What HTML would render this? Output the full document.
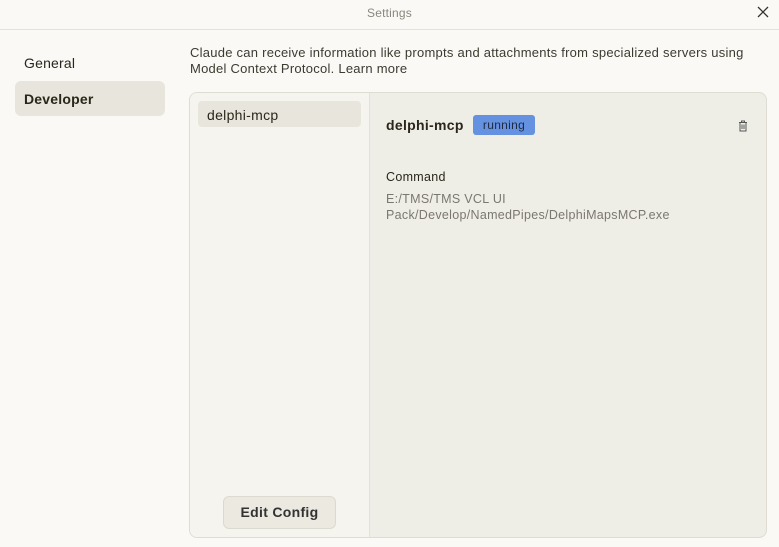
<html><head><style>
body{margin:0;width:779px;height:547px;background:#faf9f5;font-family:"Liberation Sans",sans-serif;color:#29261b;position:relative;overflow:hidden}
.a{position:absolute}
</style></head><body>
<div class="a" style="left:0;top:0;width:779px;height:29px;border-bottom:1px solid #e3e1d9"></div>
<div class="a" style="left:0;width:779px;top:6px;text-align:center;font-size:12px;color:#8a877e;letter-spacing:0.2px">Settings</div>
<svg class="a" style="left:757px;top:6px" width="12" height="12"><path d="M1 1L11 11M11 1L1 11" stroke="#333" stroke-width="1.3"/></svg>
<div class="a" style="left:24px;top:55px;font-size:14px;letter-spacing:0.2px">General</div>
<div class="a" style="left:15px;top:81px;width:150px;height:35px;background:#e8e6dc;border-radius:6px"></div>
<div class="a" style="left:24px;top:91px;font-size:14px;font-weight:bold;letter-spacing:0.2px">Developer</div>
<div class="a" style="left:190px;top:45px;font-size:13px;line-height:16px;color:#3d3a30;letter-spacing:0.25px;white-space:nowrap">Claude can receive information like prompts and attachments from specialized servers using<br>Model Context Protocol. Learn more</div>
<div class="a" style="left:189px;top:92px;width:576px;height:444px;border:1px solid #dedcd3;border-radius:8px;overflow:hidden;background:#efeee6">
<div class="a" style="left:0;top:0;width:179px;height:444px;background:#f5f4ef;border-right:1px solid #e3e1d9"></div>
<div class="a" style="left:8px;top:8px;width:163px;height:26px;background:#e8e6dc;border-radius:4px"></div>
<div class="a" style="left:17px;top:14px;font-size:14px;letter-spacing:0.3px">delphi-mcp</div>
<div class="a" style="left:33px;top:403px;width:111px;height:31px;background:#ebe9e0;border:1px solid #dcdad0;border-radius:6px;text-align:center;line-height:31px;font-size:14px;font-weight:bold;color:#333;letter-spacing:0.3px">Edit Config</div>
<div class="a" style="left:196px;top:24px;font-size:14px;font-weight:bold;letter-spacing:0.3px">delphi-mcp</div>
<div class="a" style="left:283px;top:22px;width:62px;height:20px;background:#6592e0;border-radius:3px;text-align:center;line-height:20px;font-size:12px;color:#1d2a44;letter-spacing:0.3px">running</div>
<svg class="a" style="left:548px;top:27px" width="10" height="12"><path d="M1 2.5H9M3.5 2.5V1H6.5V2.5M2 2.5V11H8V2.5M4 4.5V9M6 4.5V9" stroke="#555" fill="none" stroke-width="1"/></svg>
<div class="a" style="left:196px;top:77px;font-size:12.5px;letter-spacing:0.3px">Command</div>
<div class="a" style="left:196px;top:98px;font-size:12.5px;line-height:16px;color:#7a776e;letter-spacing:0.3px;white-space:nowrap">E:/TMS/TMS VCL UI<br>Pack/Develop/NamedPipes/DelphiMapsMCP.exe</div>
</div>
</body></html>
